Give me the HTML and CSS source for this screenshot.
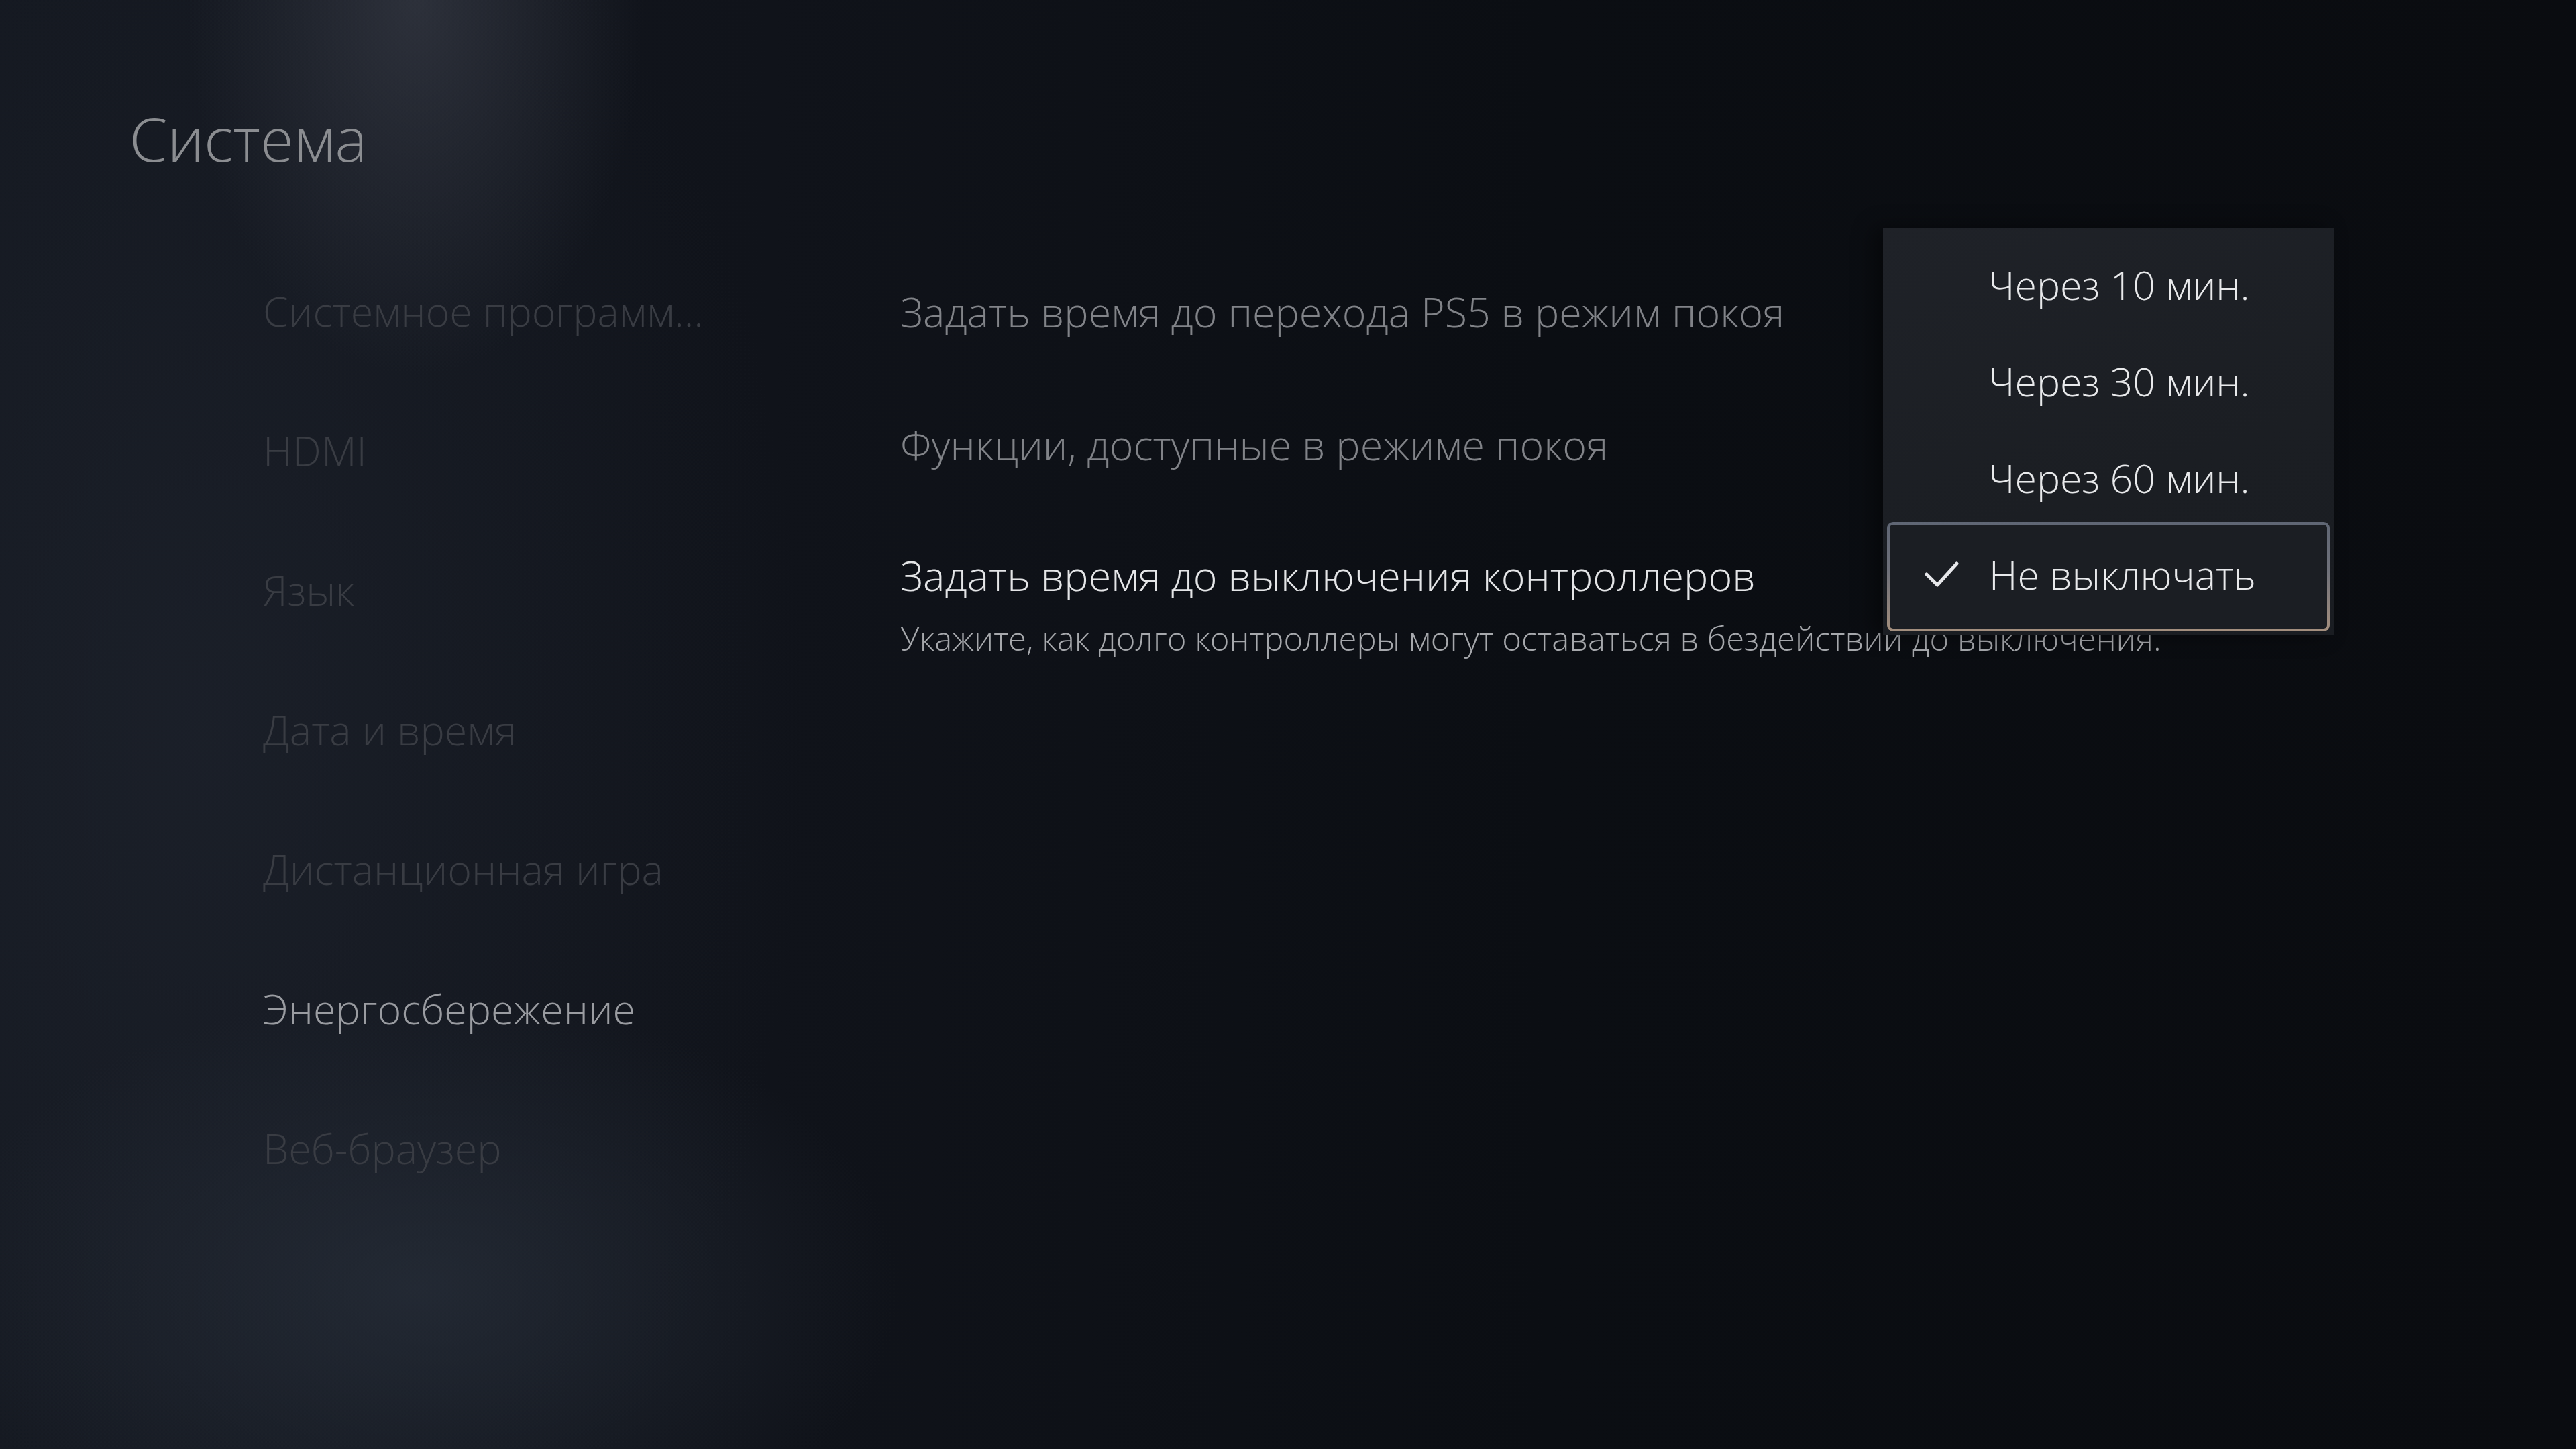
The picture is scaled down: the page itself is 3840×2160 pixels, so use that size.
FILE: index.html
```html
<!DOCTYPE html>
<html lang="ru">
<head>
  <meta charset="UTF-8">
  <title>Система</title>
  <link rel="stylesheet" href="styles.css">
</head>
<body>

  <div class="screen">
    <h1 class="page-title">Система</h1>

    <div class="columns">
      <ul class="side-menu">
        <li>Системное программ...</li>
        <li>HDMI</li>
        <li>Язык</li>
        <li>Дата и время</li>
        <li>Дистанционная игра</li>
        <li class="active">Энергосбережение</li>
        <li>Веб-браузер</li>
      </ul>

      <div class="settings">
        <div class="setting">
          <div class="setting-name">Задать время до перехода PS5 в режим покоя</div>
        </div>
        <div class="setting">
          <div class="setting-name">Функции, доступные в режиме покоя</div>
        </div>
        <div class="setting current">
          <div class="setting-name">Задать время до выключения контроллеров</div>
          <div class="setting-hint">Укажите, как долго контроллеры могут оставаться в бездействии до выключения.</div>
        </div>
      </div>
    </div>

    <!-- options popup for the focused setting -->
    <div class="dropdown">
      <div class="option">Через 10 мин.</div>
      <div class="option">Через 30 мин.</div>
      <div class="option">Через 60 мин.</div>
      <div class="option selected">
        <svg class="check" width="52" height="40" viewBox="0 0 52 40">
          <polyline points="4,20 20,36 49,4" fill="none" stroke="#e6e7ea" stroke-width="5" stroke-linecap="round" stroke-linejoin="round"/>
        </svg>
        <span>Не выключать</span>
      </div>
    </div>
  </div>

</body>
</html>
```

FILE: styles.css
```css
body {
  margin: 0;
  font-family: 'Open Sans', 'Noto Sans', sans-serif;
  font-weight: 300;
  background: #0c0f14;
}

.screen {
  position: relative;
  width: 3840px;
  height: 2160px;
  overflow: hidden;
  background:
    radial-gradient(ellipse 340px 560px at 620px 0px, rgba(70, 74, 86, 0.5), rgba(70, 74, 86, 0) 100%),
    radial-gradient(ellipse 720px 440px at 620px 1920px, rgba(44, 52, 64, 0.6), rgba(44, 52, 64, 0) 100%),
    radial-gradient(ellipse 900px 1500px at 300px 1100px, rgba(30, 35, 45, 0.7), rgba(30, 35, 45, 0) 100%),
    linear-gradient(to right, #141820 0%, #10131a 30%, #0b0e13 60%, #0a0c10 100%);
}

.page-title {
  margin: 0;
  padding: 160px 0 0 193px;
  font-size: 91px;
  line-height: 92px;
  font-weight: 300;
  color: #8b8d91;
}

.columns {
  display: flex;
  margin-top: 108px;
}

.side-menu {
  flex: none;
  box-sizing: border-box;
  list-style: none;
  margin: 0;
  padding: 0 0 0 392px;
  width: 1342px;
}

.side-menu li {
  height: 208px;
  line-height: 208px;
  font-size: 61px;
  color: #393c43;
  white-space: nowrap;
}

.side-menu li.active {
  color: #9a9ca1;
}

.settings {
  padding-top: 6px;
  width: 2138px;
}

.setting {
  height: 197px;
  border-bottom: 1px solid #1b1e24;
  display: flex;
  align-items: center;
}

.setting-name {
  font-size: 61px;
  line-height: 80px;
  color: #818388;
  white-space: nowrap;
}

.setting.current {
  display: block;
  border-bottom: none;
  padding-top: 56px;
}

.setting.current .setting-name {
  color: #e4e5e7;
}

.setting-hint {
  margin-top: 23px;
  font-size: 49px;
  line-height: 60px;
  color: #a6a8ac;
  white-space: nowrap;
}

.dropdown {
  position: absolute;
  left: 2807px;
  top: 340px;
  width: 673px;
  height: 606px;
  box-sizing: border-box;
  padding-top: 12px;
  background: linear-gradient(160deg, #1f2228 0%, #1b1e23 60%, #1a1d22 100%);
  box-shadow: -14px 0 30px rgba(0, 0, 0, 0.45);
}

.option {
  height: 144px;
  line-height: 144px;
  padding-left: 157px;
  font-size: 59px;
  color: #e8e9eb;
  white-space: nowrap;
}

.option.selected {
  display: flex;
  align-items: center;
  gap: 45px;
  height: 163px;
  line-height: 80px;
  box-sizing: border-box;
  margin: -6px 7px 0 6px;
  padding: 0 0 8px 51px;
  border: 4px solid transparent;
  border-radius: 9px;
  background:
    linear-gradient(#1b1e23, #1b1e23) padding-box,
    linear-gradient(to bottom, #5f6674 0%, #6f717a 45%, #a48f7e 100%) border-box;
}

.check {
  flex: none;
}
```
